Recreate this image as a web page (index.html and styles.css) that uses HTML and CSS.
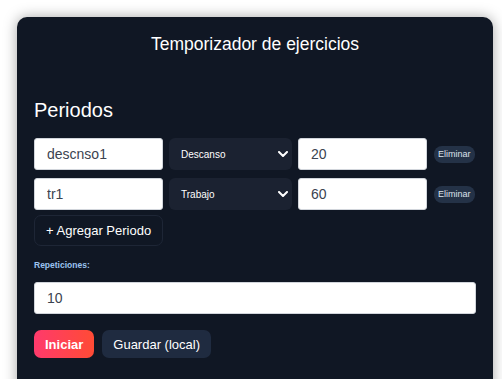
FILE: index.html
```html
<!DOCTYPE html>
<html lang="es">
<head>
<meta charset="utf-8">
<title>Temporizador de ejercicios</title>
<link rel="stylesheet" href="styles.css">
</head>
<body>
<main class="card">
  <h1 class="title">Temporizador de ejercicios</h1>
  <h2 class="section">Periodos</h2>
  <div class="periods">
    <div class="row">
      <input class="field" type="text" value="descnso1">
      <div class="select"><span>Descanso</span><svg class="chev" viewBox="0 0 10 6" width="10" height="6"><path d="M1 1l4 4 4-4" fill="none" stroke="#fff" stroke-width="2" stroke-linecap="round" stroke-linejoin="round"/></svg></div>
      <input class="field" type="text" value="20">
      <button class="del">Eliminar</button>
    </div>
    <div class="row">
      <input class="field" type="text" value="tr1">
      <div class="select"><span>Trabajo</span><svg class="chev" viewBox="0 0 10 6" width="10" height="6"><path d="M1 1l4 4 4-4" fill="none" stroke="#fff" stroke-width="2" stroke-linecap="round" stroke-linejoin="round"/></svg></div>
      <input class="field" type="text" value="60">
      <button class="del">Eliminar</button>
    </div>
  </div>
  <button class="add">+ Agregar Periodo</button>
  <label class="label">Repeticiones:</label>
  <input class="field wide" type="text" value="10">
  <div class="actions">
    <button class="start">Iniciar</button>
    <button class="save">Guardar (local)</button>
  </div>
</main>
</body>
</html>
```

FILE: styles.css
```css
html, body {
  margin: 0;
  padding: 0;
  background: #ffffff;
  height: 100%;
  overflow: hidden;
}
body {
  padding: 17px 0 0 17px;
  box-sizing: border-box;
  font-family: "Liberation Sans", Arial, sans-serif;
}
.card {
  width: 476px;
  height: 420px;
  box-sizing: border-box;
  background: #101724;
  border-radius: 10px;
  box-shadow: 0 0 14px rgba(0, 0, 0, 0.35);
  padding: 17px 17px 0 17px;
  display: flex;
  flex-direction: column;
  align-items: flex-start;
}
.title {
  align-self: stretch;
  margin: 0;
  text-align: center;
  font-size: 17.5px;
  font-weight: normal;
  color: #ffffff;
  line-height: 20px;
}
.section {
  margin: 44px 0 0 0;
  font-size: 20px;
  font-weight: normal;
  color: #ffffff;
  line-height: 24px;
}
.periods {
  margin-top: 16px;
  display: flex;
  flex-direction: column;
  gap: 8px;
}
.row {
  display: flex;
  align-items: center;
  gap: 6px;
}
.field {
  width: 129px;
  height: 32px;
  box-sizing: border-box;
  border: 1px solid #d1d5db;
  border-radius: 3px;
  background: #ffffff;
  padding: 0 12px;
  font-family: inherit;
  font-size: 14px;
  color: #3b4350;
  outline: none;
}
.select {
  width: 123px;
  height: 32px;
  box-sizing: border-box;
  background: #1b2231;
  border-radius: 6px;
  display: flex;
  align-items: center;
  justify-content: space-between;
  padding: 0 4px 0 12px;
  color: #ffffff;
  font-size: 10px;
}
.del {
  margin-left: 1px;
  height: 17px;
  padding: 0 4px;
  border: none;
  border-radius: 8px;
  background: #243247;
  color: #dde3ec;
  font-family: inherit;
  font-size: 9px;
}
.add {
  margin-top: 5px;
  height: 31px;
  padding: 0 11px;
  background: transparent;
  border: 1px solid #1e2636;
  border-radius: 7px;
  color: #ffffff;
  font-family: inherit;
  font-size: 13px;
}
.label {
  margin-top: 14px;
  font-size: 8.5px;
  font-weight: bold;
  color: #9cc3f0;
  line-height: 10px;
}
.wide {
  margin-top: 12px;
  width: 442px;
}
.actions {
  margin-top: 16px;
  display: flex;
  gap: 8px;
}
.start, .save {
  height: 28px;
  border: none;
  border-radius: 7px;
  color: #ffffff;
  font-family: inherit;
  font-size: 13px;
  padding: 0 11px;
}
.start {
  font-weight: bold;
  background: linear-gradient(90deg, #ff3a6c, #ff4b35);
}
.save {
  background: #1f2b40;
  padding: 0 11px;
}
```
